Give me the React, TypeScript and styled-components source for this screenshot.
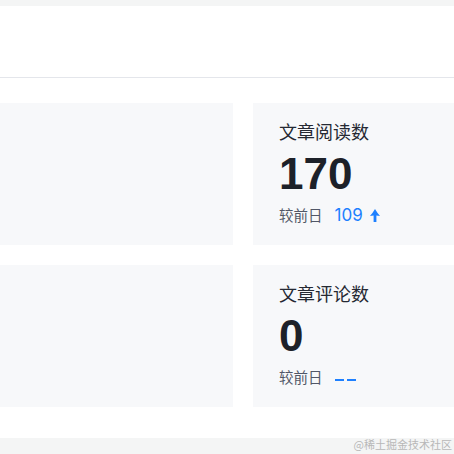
import styled, { createGlobalStyle } from "styled-components";

const GlobalStyle = createGlobalStyle`
  html, body {
    margin: 0;
    padding: 0;
    background: #fff;
    font-family: "Inter", "Noto Sans CJK SC", sans-serif;
  }
  * { box-sizing: border-box; }
`

const Page = styled.div`
  width: 454px;
  height: 454px;
  overflow: hidden;
  display: flex;
  flex-direction: column;
  position: relative;
`
const TopStrip = styled.div`
  height: 6px;
  background: #f4f5f5;
`
const Header = styled.div`
  height: 72px;
  background: #fff;
  border-bottom: 1px solid #e4e6eb;
`
const Grid = styled.div`
  display: grid;
  grid-template-columns: 233px 1fr;
  grid-auto-rows: 142px;
  column-gap: 20px;
  row-gap: 20px;
  padding-top: 25px;
  margin-right: -20px;
`
const Card = styled.div`
  background: #f7f8fa;
  padding: 14px 26px;
  display: flex;
  flex-direction: column;
`
const Title = styled.div`
  font-size: 18px;
  line-height: 28px;
  color: #252933;
  font-family: "Noto Sans CJK SC", sans-serif;
`
const Count = styled.div`
  font-size: 44px;
  font-weight: 700;
  line-height: 52px;
  margin-top: 3px;
  color: #1d2129;
  font-family: "Liberation Sans", "Noto Sans", sans-serif;
`
const Compare = styled.div`
  display: flex;
  align-items: center;
  margin-top: 4px;
  font-size: 14.5px;
  color: #515767;
  line-height: 22px;
  font-family: "Noto Sans CJK SC", sans-serif;
`
const Delta = styled.span`
  margin-left: 12px;
  font-size: 17px;
  color: #1e80ff;
  display: flex;
  align-items: center;
  gap: 7px;
  font-family: "Inter", sans-serif;
`
const Dash = styled.span`
  margin-left: 12px;
  margin-top: 6px;
  display: flex;
  gap: 3px;
  & i {
    width: 9px;
    height: 2px;
    background: #1e80ff;
  }
`
const Footer = styled.div`
  margin-top: auto;
  height: 16px;
  background: #f4f5f5;
`
const Watermark = styled.div`
  position: absolute;
  right: 2px;
  bottom: 2px;
  font-size: 11px;
  color: #b8b8b8;
  font-family: "Noto Sans CJK SC", sans-serif;
`

function UpArrow() {
  return (
    <svg width="10" height="13" viewBox="0 0 10 13">
      <path d="M5 0 Q7 3.5 10 7 Q8 6.6 6.4 6.6 V13 H3.6 V6.6 Q2 6.6 0 7 Q3 3.5 5 0 Z" fill="#1e80ff" />
    </svg>
  )
}

const stats = [
  { title: "文章阅读数", count: 170, delta: 109 },
  { title: "文章评论数", count: 0, delta: null },
]

function App() {
  return (
    <>
      <GlobalStyle />
      <Page>
        <TopStrip />
        <Header />
        <Grid>
          {stats.map((s) => (
            <>
              <Card key={s.title + "l"} />
              <Card key={s.title}>
                <Title>{s.title}</Title>
                <Count>{s.count}</Count>
                <Compare>
                  较前日
                  {s.delta !== null
                    ? <Delta>{s.delta}<UpArrow /></Delta>
                    : <Dash><i /><i /></Dash>}
                </Compare>
              </Card>
            </>
          ))}
        </Grid>
        <Footer />
        <Watermark>@稀土掘金技术社区</Watermark>
      </Page>
    </>
  )
}
export default App;
